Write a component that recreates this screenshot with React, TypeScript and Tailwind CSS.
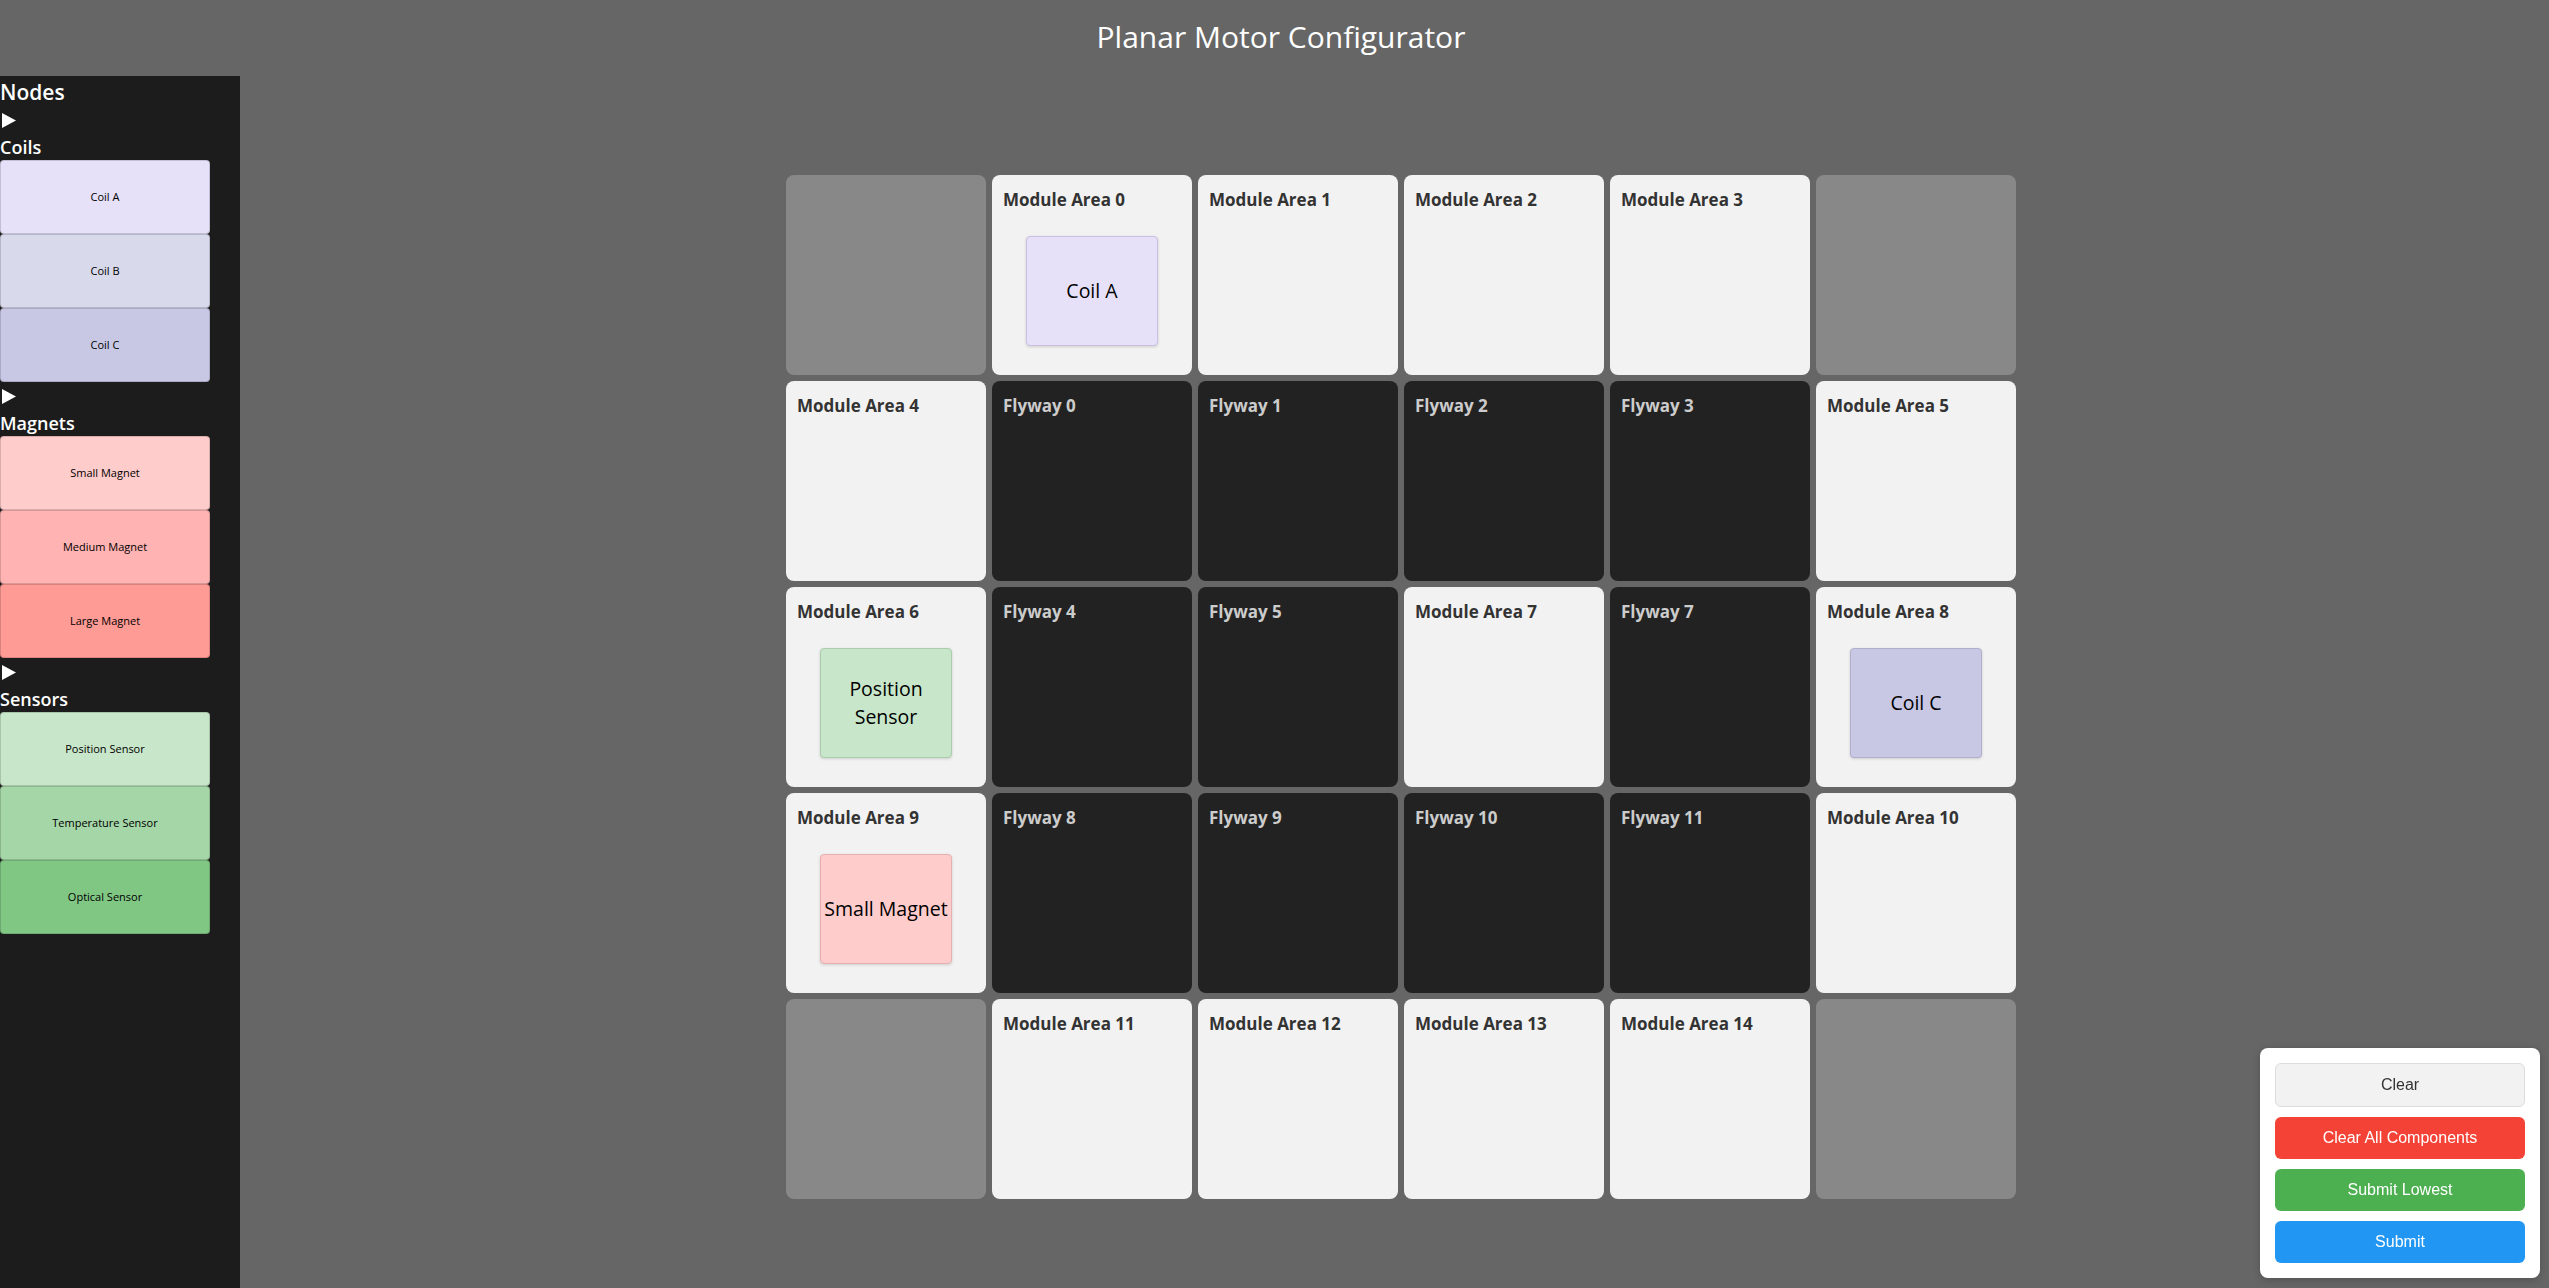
const NODE_GROUPS = [
  {
    name: "Coils",
    items: [
      { label: "Coil A", color: "bg-[#e6e0f8]" },
      { label: "Coil B", color: "bg-[#d8d9ea]" },
      { label: "Coil C", color: "bg-[#c8c8e4]" },
    ],
  },
  {
    name: "Magnets",
    items: [
      { label: "Small Magnet", color: "bg-[#ffcccc]" },
      { label: "Medium Magnet", color: "bg-[#ffb3b3]" },
      { label: "Large Magnet", color: "bg-[#ff9b95]" },
    ],
  },
  {
    name: "Sensors",
    items: [
      { label: "Position Sensor", color: "bg-[#c8e6c9]" },
      { label: "Temperature Sensor", color: "bg-[#a5d6a7]" },
      { label: "Optical Sensor", color: "bg-[#81c784]" },
    ],
  },
];

type Cell =
  | { kind: "empty" }
  | { kind: "module"; label: string; part?: { lines: string[]; color: string } }
  | { kind: "flyway"; label: string };

const m = (n: number, part?: { lines: string[]; color: string }): Cell => ({
  kind: "module",
  label: `Module Area ${n}`,
  part,
});
const f = (n: number): Cell => ({ kind: "flyway", label: `Flyway ${n}` });
const e: Cell = { kind: "empty" };

const GRID: Cell[] = [
  e, m(0, { lines: ["Coil A"], color: "bg-[#e6e0f8] border-[#c9c0e2]" }), m(1), m(2), m(3), e,
  m(4), f(0), f(1), f(2), f(3), m(5),
  m(6, { lines: ["Position", "Sensor"], color: "bg-[#c8e6c9] border-[#abcdad]" }), f(4), f(5), m(7), f(7),
  m(8, { lines: ["Coil C"], color: "bg-[#c8c8e4] border-[#aeaecd]" }),
  m(9, { lines: ["Small Magnet"], color: "bg-[#ffcccc] border-[#e6b0b0]" }), f(8), f(9), f(10), f(11), m(10),
  e, m(11), m(12), m(13), m(14), e,
];

function Sidebar() {
  return (
    <aside className="w-[240px] shrink-0 bg-[#1c1c1c] text-white">
      <h2 className="h-[30px] pt-[2px] text-[21px] font-semibold leading-[28px]">Nodes</h2>
      {NODE_GROUPS.map((group) => (
        <div key={group.name}>
          <div className="flex h-[26px] items-center pl-[2px] pt-[2px]">
            <svg width="14" height="15" viewBox="0 0 14 15">
              <path d="M0 0 L14 7.5 L0 15 Z" fill="#fff" />
            </svg>
          </div>
          <h3 className="h-[28px] pt-[3px] text-[18px] font-semibold leading-[25px]">{group.name}</h3>
          <div className="w-[210px]">
            {group.items.map((item) => (
              <div
                key={item.label}
                className={`flex h-[74px] items-center justify-center rounded-[4px] border border-black/15 text-[11px] text-black ${item.color}`}
              >
                {item.label}
              </div>
            ))}
          </div>
        </div>
      ))}
    </aside>
  );
}

function GridCell({ cell }: { cell: Cell }) {
  if (cell.kind === "empty") {
    return <div className="h-[200px] w-[200px] rounded-[8px] bg-[#888888]" />;
  }
  const dark = cell.kind === "flyway";
  return (
    <div
      className={`relative h-[200px] w-[200px] rounded-[8px] px-[11px] pt-[14px] ${
        dark ? "bg-[#222222] text-[#cccccc]" : "bg-[#f2f2f2] text-[#333333]"
      }`}
    >
      <div className="text-[17px] font-bold leading-[22px]">{cell.label}</div>
      {cell.kind === "module" && cell.part && (
        <div className="flex justify-center pt-[25px]">
          <div
            className={`flex h-[110px] w-[132px] flex-col items-center justify-center rounded-[4px] border text-[19.5px] leading-[28px] text-black shadow-[0_1px_3px_rgba(0,0,0,0.15)] ${cell.part.color}`}
          >
            {cell.part.lines.map((l) => (
              <span key={l} className="whitespace-nowrap">
                {l}
              </span>
            ))}
          </div>
        </div>
      )}
    </div>
  );
}

function ActionPanel() {
  return (
    <div className="fixed bottom-[10px] right-[9px] flex w-[280px] flex-col gap-[10px] rounded-[8px] bg-white p-[15px] font-['Liberation_Sans',Arial,sans-serif] text-[16px] shadow-[0_2px_8px_rgba(0,0,0,0.2)]">
      <button className="h-[44px] rounded-[6px] border border-[#dddddd] bg-[#f2f2f2] text-[#333333]">Clear</button>
      <button className="h-[42px] rounded-[6px] bg-[#f44336] text-white">Clear All Components</button>
      <button className="h-[42px] rounded-[6px] bg-[#4caf50] text-white">Submit Lowest</button>
      <button className="h-[42px] rounded-[6px] bg-[#2196f3] text-white">Submit</button>
    </div>
  );
}

export default function App() {
  return (
    <div className="flex h-screen flex-col overflow-hidden bg-[#666666] font-['Open_Sans','Noto_Sans',sans-serif]">
      <header className="h-[76px] shrink-0 pl-[13px] pt-[17px] text-center">
        <h1 className="text-[30px] font-normal leading-[40px] text-white">Planar Motor Configurator</h1>
      </header>
      <div className="flex min-h-0 flex-1">
        <Sidebar />
        <main className="flex flex-1 items-center justify-center pl-[13px] pt-[10px]">
          <div className="grid grid-cols-[repeat(6,200px)] gap-[6px]">
            {GRID.map((cell, i) => (
              <GridCell key={i} cell={cell} />
            ))}
          </div>
        </main>
      </div>
      <ActionPanel />
    </div>
  );
}
